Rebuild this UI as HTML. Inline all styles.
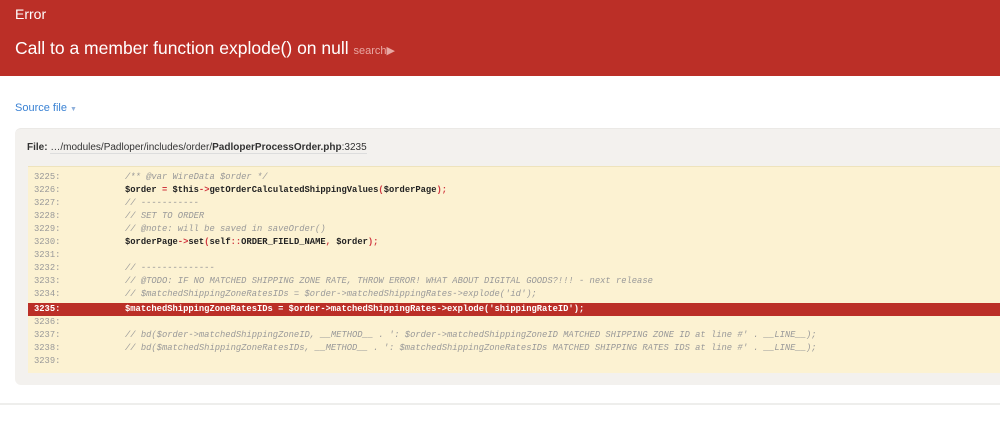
<!DOCTYPE html>
<html><head><meta charset="utf-8"><style>
*{margin:0;padding:0;box-sizing:border-box}
body{width:1000px;height:424px;overflow:hidden;background:#fff;font-family:"Liberation Sans",sans-serif;position:relative}
#hdr{position:absolute;left:0;top:0;width:1000px;height:76px;background:#bb2f27;color:#fff}
#hdr .t{position:absolute;left:15px;top:6px;font-size:14px}
#hdr .m{position:absolute;left:15px;top:38px;font-size:17.5px}
#hdr .m span{font-size:11px;color:#e8a7a2}
#src{position:absolute;left:15px;top:102px;font-size:11px;color:#3a82d4}
#src span{font-size:7px;color:#8fb0db}
#box{position:absolute;left:15px;top:128px;width:1000px;height:257px;background:#f3f1ee;border-radius:6px 0 0 6px;border-top:1px solid #ebe9e6}
#file{position:absolute;left:27px;top:142px;font-size:10px;color:#333}
#file b{font-weight:bold}
#file .p{border-bottom:1px solid #ddd}
#code{position:absolute;left:28px;top:166px;width:972px;height:207px;background:#fcf2d2;border-top:1px solid #eee3bc}
.l{position:absolute;left:0;width:972px;height:13px;font-family:"Liberation Mono",monospace;font-size:8.8px;line-height:13px;white-space:pre;color:#222;font-weight:bold}
.l .n{position:absolute;left:6px;color:#999;font-weight:normal}
.l .c{position:absolute;left:97px}
.cm{color:#999;font-style:italic;font-weight:normal}
.r{color:#d0363f}
.hl{background:#bb2f27;color:#fff}
.hl .n{color:#fff;font-weight:bold}
#sep{position:absolute;left:0;top:403px;width:1000px;height:2px;background:#eeeeec}
</style></head><body>
<div id="hdr"><div class="t">Error</div><div class="m">Call to a member function explode() on null <span>search▶</span></div></div>
<div id="src">Source file <span>▼</span></div>
<div id="box"></div>
<div id="file"><b>File:</b> <span class="p">…/modules/Padloper/includes/order/<b>PadloperProcessOrder.php</b>:3235</span></div>
<div id="code">
<div class="l" style="top:4px"><span class="n">3225:</span><span class="c cm">/** @var WireData $order */</span></div>
<div class="l" style="top:17px"><span class="n">3226:</span><span class="c">$order <span class="r">=</span> $this<span class="r">-&gt;</span>getOrderCalculatedShippingValues<span class="r">(</span>$orderPage<span class="r">);</span></span></div>
<div class="l" style="top:30px"><span class="n">3227:</span><span class="c cm">// -----------</span></div>
<div class="l" style="top:43px"><span class="n">3228:</span><span class="c cm">// SET TO ORDER</span></div>
<div class="l" style="top:56px"><span class="n">3229:</span><span class="c cm">// @note: will be saved in saveOrder()</span></div>
<div class="l" style="top:69px"><span class="n">3230:</span><span class="c">$orderPage<span class="r">-&gt;</span>set<span class="r">(</span>self<span class="r">::</span>ORDER_FIELD_NAME<span class="r">,</span> $order<span class="r">);</span></span></div>
<div class="l" style="top:82px"><span class="n">3231:</span></div>
<div class="l" style="top:95px"><span class="n">3232:</span><span class="c cm">// --------------</span></div>
<div class="l" style="top:108px"><span class="n">3233:</span><span class="c cm">// @TODO: IF NO MATCHED SHIPPING ZONE RATE, THROW ERROR! WHAT ABOUT DIGITAL GOODS?!!! - next release</span></div>
<div class="l" style="top:121px"><span class="n">3234:</span><span class="c cm">// $matchedShippingZoneRatesIDs = $order-&gt;matchedShippingRates-&gt;explode('id');</span></div>
<div class="l hl" style="top:136px"><span class="n">3235:</span><span class="c">$matchedShippingZoneRatesIDs = $order-&gt;matchedShippingRates-&gt;explode('shippingRateID');</span></div>
<div class="l" style="top:149px"><span class="n">3236:</span></div>
<div class="l" style="top:162px"><span class="n">3237:</span><span class="c cm">// bd($order-&gt;matchedShippingZoneID, __METHOD__ . ': $order-&gt;matchedShippingZoneID MATCHED SHIPPING ZONE ID at line #' . __LINE__);</span></div>
<div class="l" style="top:175px"><span class="n">3238:</span><span class="c cm">// bd($matchedShippingZoneRatesIDs, __METHOD__ . ': $matchedShippingZoneRatesIDs MATCHED SHIPPING RATES IDS at line #' . __LINE__);</span></div>
<div class="l" style="top:188px"><span class="n">3239:</span></div>
</div>
<div id="sep"></div>
</body></html>
